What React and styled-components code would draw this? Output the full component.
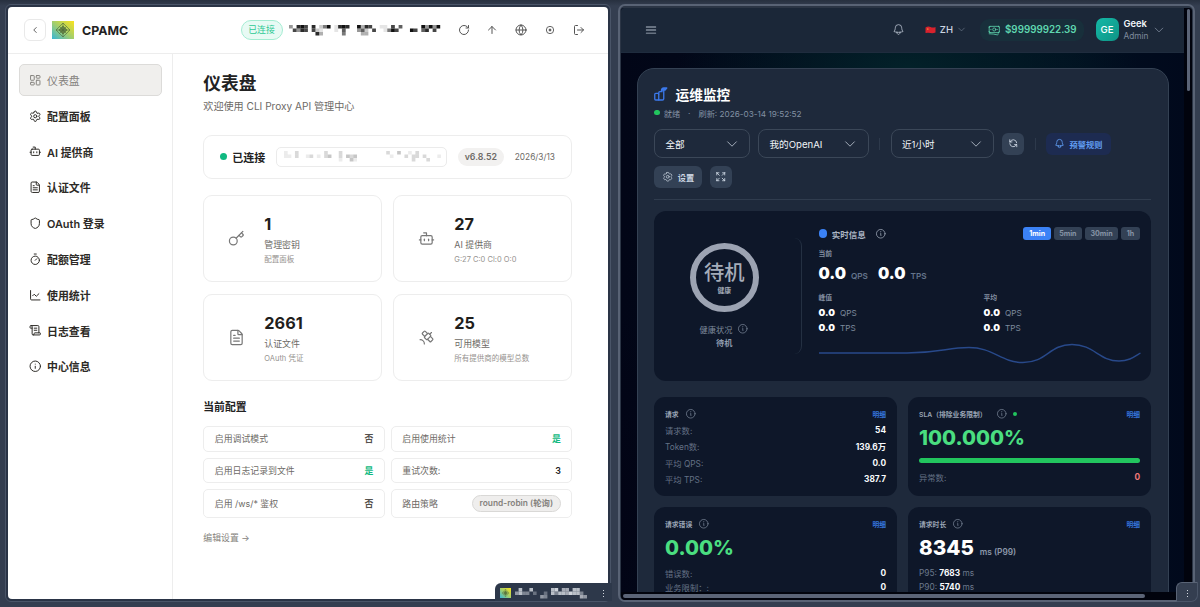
import React from 'react';
import styled, {createGlobalStyle} from 'styled-components';
import {
  ArrowUp, Bot, ChartLine, ChevronLeft, FileText, Globe, Info, Key, LayoutDashboard,
  LogOut, RotateCw, Satellite, ScrollText, Settings, Shield, Timer,
} from 'lucide-react';
import {
  HiBars3, HiOutlineArrowsPointingOut, HiOutlineBanknotes, HiOutlineBell,
  HiOutlineChevronDown, HiOutlineCog6Tooth, HiOutlineInformationCircle,
} from 'react-icons/hi2';
import {HiOutlineRefresh} from 'react-icons/hi';

const GlobalStyle = createGlobalStyle`
  * { box-sizing: border-box; }
  html, body { margin: 0; padding: 0; overflow: hidden; }
  body {
    font-family: Inter, "Noto Sans CJK SC", sans-serif;
    -webkit-font-smoothing: antialiased;
  }
  svg { display: block; flex: none; }
`;

const Desktop = styled.div`
  width: 1200px;
  height: 607px;
  display: flex;
  gap: 7px;
  padding: 4px 3px 3px 5px;
  background: linear-gradient(#27303f 0, #343e50 6px, #343e50 100%);
  overflow: hidden;
`;

/* ---------- left window ---------- */

const LightFrame = styled.div`
  width: 606px;
  height: 598px;
  padding: 2px;
  background: #2a3446;
  border: 1px solid #4a5568;
  border-radius: 6px;
  position: relative;
`;

const LightWindow = styled.div`
  width: 600px;
  height: 592px;
  border-radius: 4px;
  background: #fff;
  overflow: hidden;
`;

const LightHeader = styled.header`
  height: 46.5px;
  display: flex;
  align-items: center;
  padding: 1px 16px 0;
  border-bottom: 1px solid #ededed;
`;

const BackButton = styled.div`
  width: 22px;
  height: 22px;
  display: flex;
  align-items: center;
  justify-content: center;
  border: 1px solid #e9e9e9;
  border-radius: 6px;
  color: #444;
  margin-right: 6px;
`;

const Brand = styled.div`
  margin-left: 8px;
  width: 158.5px;
  font-size: 12.4px;
  font-weight: 700;
  color: #222;
`;

const Connected = styled.div`
  width: 42px;
  height: 20px;
  line-height: 18px;
  text-align: center;
  border: 1px solid #a4ecd2;
  border-radius: 10px;
  background: #e8faf4;
  color: #2ec995;
  font-size: 8.9px;
  margin-right: 6.5px;
`;

const HeaderIcons = styled.div`
  display: flex;
  gap: 16.7px;
  margin-left: auto;
  margin-right: 7.5px;
  color: #555;
`;

const LightBody = styled.div`
  display: flex;
  height: 546px;
`;

const Sidebar = styled.nav`
  width: 165px;
  padding: 10.5px 11px;
  border-right: 1px solid #ededed;
  display: flex;
  flex-direction: column;
  gap: 3.8px;
`;

const NavItem = styled.div`
  width: 142.5px;
  height: 32px;
  display: flex;
  align-items: center;
  gap: 6px;
  padding: 0 0 0 8.5px;
  border: 1px solid ${props => props.$active ? "#dcdbd9" : "transparent"};
  border-radius: 5px;
  background: ${props => props.$active ? "#f0efed" : "none"};
  color: ${props => props.$active ? "#85827d" : "#2d2a26"};
  font-size: 10.9px;
  font-weight: ${props => props.$active ? 400 : 600};
`;

const Main = styled.main`
  width: 400px;
  padding: 19px 0 0 30.3px;
`;

const PageTitle = styled.h1`
  margin: 0;
  height: 22px;
  line-height: 22px;
  font-size: 17.7px;
  font-weight: 600;
  color: #222;
`;

const PageSub = styled.p`
  margin: 4px 0 21.5px;
  height: 15px;
  line-height: 15px;
  font-size: 10.1px;
  color: #6d6a66;
`;

const StatusCard = styled.div`
  width: 369px;
  height: 43.5px;
  display: flex;
  align-items: center;
  padding: 0 16px;
  border: 1px solid #ededed;
  border-radius: 9px;
  margin-bottom: 16px;
`;

const Dot = styled.span`
  flex: none;
  width: ${props => props.$size}px;
  height: ${props => props.$size}px;
  border-radius: 50%;
  background: ${props => props.$color};
`;

const StatusText = styled.span`
  margin: 0 11px 0 5px;
  width: 33px;
  font-size: 11px;
  font-weight: 600;
  color: #222;
  white-space: nowrap;
`;

const UrlBox = styled.div`
  width: 170.5px;
  height: 20px;
  border: 1px solid #ebebeb;
  border-radius: 5px;
  padding: 3.5px 7px;
`;

const Version = styled.span`
  width: 46px;
  height: 18px;
  line-height: 18px;
  margin: 0 11px;
  text-align: center;
  border-radius: 9px;
  background: #f2f1f0;
  color: #6d6a66;
  font-size: 8.8px;
  font-weight: 600;
`;

const BuildDate = styled.span`
  font-size: 8.3px;
  color: #6d6a66;
`;

const StatGrid = styled.div`
  display: grid;
  grid-template-columns: 179px 179px;
  grid-auto-rows: 87.5px;
  gap: 11.5px 11px;
`;

const StatCard = styled.div`
  display: flex;
  align-items: center;
  border: 1px solid #ededed;
  border-radius: 9px;
  padding-left: 24px;
  gap: 19px;
  color: #777;
`;

const StatText = styled.div`
  display: flex;
  flex-direction: column;
  padding-top: 3px;
`;

const StatNumber = styled.b`
  height: 22px;
  line-height: 22px;
  font-size: 16.3px;
  color: #1f1e1c;
`;

const StatLabel = styled.span`
  height: 18px;
  line-height: 19px;
  font-size: 8.9px;
  color: #6d6a66;
`;

const StatHint = styled.span`
  height: 13px;
  line-height: 13px;
  font-size: 7.5px;
  color: #96938f;
  white-space: nowrap;
`;

const SectionTitle = styled.h2`
  margin: 18.5px 0 10.5px;
  height: 16px;
  line-height: 16px;
  font-size: 10.8px;
  font-weight: 700;
  color: #222;
`;

const ConfigGrid = styled.div`
  display: grid;
  grid-template-columns: 181.5px 181.5px;
  grid-template-rows: 25.5px 25.5px 28.5px;
  gap: 6px;
`;

const ConfigRow = styled.div`
  display: flex;
  align-items: center;
  justify-content: space-between;
  border: 1px solid #ededed;
  border-radius: 5px;
  padding: 0 10.5px;
  font-size: 8.9px;
  color: #6d6a66;
`;

const ConfigValue = styled.span`
  font-weight: 600;
  color: ${props => props.$on ? "#12b981" : props.$dark ? "#222" : "#55524e"};
`;

const StrategyTag = styled.span`
  width: 89px;
  height: 17px;
  line-height: 15px;
  text-align: center;
  background: #efeeed;
  border: 1px solid #d9d8d6;
  border-radius: 9px;
  font-weight: 600;
  font-size: 8.4px;
  color: #85827d;
`;

const EditLink = styled.div`
  margin-top: 12.5px;
  height: 16px;
  line-height: 16px;
  font-size: 8.9px;
  color: #85827d;
`;

const LightTab = styled.div`
  position: absolute;
  right: -2px;
  bottom: 0;
  width: 117px;
  height: 18.5px;
  display: flex;
  align-items: center;
  gap: 4px;
  padding: 3px 8px 0 5px;
  border-radius: 6px 0 0 0;
  background: #2d384a;
`;

const Dots = styled.div`
  display: flex;
  flex-direction: column;
  gap: 1.7px;
  margin-left: auto;
  span {
    width: 1.3px;
    height: 1.3px;
    background: #d3d8df;
  }
`;

/* ---------- right window ---------- */

const DarkFrame = styled.div`
  width: 577px;
  height: 598px;
  border: 2px solid #596375;
  border-radius: 7px;
  padding: 2px 1px 0 1px;
  background: #2b3545;
  position: relative;
`;

const DarkView = styled.div`
  width: 571px;
  height: 584px;
  display: flex;
  background: #01030d;
  border-radius: 3px 3px 0 0;
  overflow: hidden;
`;

const DarkPage = styled.div`
  width: 563px;
  height: 584px;
  overflow: hidden;
  background:
    radial-gradient(ellipse 230px 80px at 51% 10%, #032129 0, rgba(3, 33, 41, 0) 100%),
    radial-gradient(ellipse 50px 200px at 0 85%, #020415 0, rgba(2, 4, 21, 0) 100%),
    linear-gradient(90deg, #020617, #010f20 80%, #01091c);
`;

const VScroll = styled.div`
  width: 8px;
  padding: 1px 0 0 2.5px;
  &:before {
    content: '';
    display: block;
    width: 3.8px;
    height: 82px;
    border-radius: 2px;
    background: #5b6477;
  }
`;

const HScroll = styled.div`
  height: 8px;
  padding: 2px 0 0 2px;
  background: #01030d;
  border-radius: 0 0 4px 4px;
  &:before {
    content: '';
    display: block;
    width: 522px;
    height: 4px;
    border-radius: 2px;
    background: #5b6477;
  }
`;

const TopBar = styled.header`
  height: 44.5px;
  display: flex;
  align-items: center;
  padding: 0 19px 0 23px;
  background: #1b2738;
  border-bottom: 1px solid #1f2c3e;
  color: #b6bfcc;
  > svg:first-child { margin-right: auto; }
`;

const Lang = styled.div`
  display: flex;
  align-items: center;
  gap: 4px;
  margin: 0 14px 0 20px;
  font-size: 9.5px;
  font-weight: 500;
  color: #cbd5e1;
`;

const Balance = styled.div`
  width: 104px;
  height: 22px;
  display: flex;
  align-items: center;
  gap: 4.5px;
  padding-left: 8px;
  border-radius: 9px;
  background: #182f3b;
  color: #5fd7b0;
  font-size: 9.8px;
  font-weight: 600;
`;

const Avatar = styled.div`
  width: 23px;
  height: 23px;
  line-height: 23px;
  text-align: center;
  margin: 0 5px 0 11.5px;
  border-radius: 7px;
  background: linear-gradient(135deg, #14b8a6, #0f9486);
  color: #fff;
  font-size: 9.6px;
  font-weight: 500;
`;

const UserText = styled.div`
  width: 29.5px;
  padding-top: 1px;
  display: flex;
  flex-direction: column;
  line-height: 12px;
  font-size: 8.3px;
  color: #7f8b9d;
  b {
    font-size: 9.4px;
    font-weight: 600;
    color: #f1f5f9;
  }
`;

const Board = styled.section`
  margin: 15.5px 0 0 15.5px;
  width: 532px;
  height: 700px;
  padding: 16px 16.5px;
  border: 1px solid #344153;
  border-radius: 17px;
  background: #1e293b;
`;

const BoardTitle = styled.h2`
  margin: 0 0 1px;
  height: 18px;
  display: flex;
  align-items: center;
  gap: 8px;
  font-size: 13.7px;
  font-weight: 700;
  color: #fff;
`;

const BoardStatus = styled.div`
  height: 17px;
  display: flex;
  align-items: center;
  gap: 4.2px;
  font-size: 8.2px;
  color: #8290a3;
  i {
    width: 10px;
    text-align: center;
    font-style: normal;
  }
`;

const Toolbar = styled.div`
  height: 29px;
  display: flex;
  align-items: center;
  margin-top: ${props => props.$top}px;
`;

const Select = styled.div`
  width: ${props => props.$width}px;
  height: 29px;
  display: flex;
  align-items: center;
  justify-content: space-between;
  padding: 0 10.5px;
  border: 1px solid #3b4758;
  border-radius: 8px;
  margin-right: 8px;
  font-size: 9.6px;
  color: #f1f5f9;
  svg { color: #b4bdc9; }
`;

const Divider = styled.span`
  width: 1px;
  height: 12px;
  background: #2d394b;
  margin: 0 10.5px 0 2.5px;
`;

const ToolButton = styled.div`
  width: ${props => props.$width}px;
  height: 22px;
  display: flex;
  align-items: center;
  justify-content: center;
  gap: 4.5px;
  margin-right: 8px;
  border-radius: 6px;
  background: ${props => props.$blue ? "#1d2b51" : "#334155"};
  color: ${props => props.$blue ? "#609cf0" : "#cbd5e1"};
  font-size: 8.2px;
  font-weight: 600;
`;

const Rule = styled.div`
  height: 1px;
  background: #303c4e;
  margin: 7px 0 11px;
`;

const Realtime = styled.div`
  height: 170px;
  display: flex;
  border-radius: 12px;
  background: #0e1729;
  padding: 27px 11px 0;
`;

const HealthCol = styled.div`
  width: 138px;
  height: 116px;
  border-right: 1px solid #243042;
  border-radius: 8px;
  display: flex;
  flex-direction: column;
  align-items: center;
  padding-top: 5.5px;
  padding-right: 17px;
`;

const Ring = styled.div`
  width: 69px;
  height: 69px;
  border: 6px solid #9ca3b2;
  border-radius: 50%;
  display: flex;
  flex-direction: column;
  align-items: center;
  color: #a4acb9;
  font-weight: 500;
  font-size: 20.3px;
  line-height: 26px;
  padding-top: 11px;
  small {
    font-size: 6.8px;
    line-height: 9px;
    font-weight: 600;
  }
`;

const HealthLabel = styled.div`
  height: 14px;
  margin-top: 9.5px;
  display: flex;
  align-items: center;
  gap: 5px;
  font-size: 8.2px;
  color: #7c899b;
`;

const HealthState = styled.div`
  height: 14px;
  line-height: 14px;
  font-size: 8.2px;
  font-weight: 600;
  color: #8f9bad;
`;

const LiveCol = styled.div`
  width: 321.5px;
  margin: -11px 0 0 17px;
`;

const LiveHead = styled.div`
  height: 14px;
  display: flex;
  align-items: center;
  font-size: 8.5px;
  font-weight: 600;
  color: #aab4c3;
  span + b { margin: 0 9px 0 5px; font-weight: 600; }
`;

const Ranges = styled.div`
  display: flex;
  gap: 2.7px;
  margin-left: auto;
`;

const Range = styled.span`
  width: ${props => props.$width}px;
  height: 13.5px;
  line-height: 13.5px;
  text-align: center;
  border-radius: 3px;
  background: ${props => props.$on ? "#3b82f6" : "#334155"};
  color: ${props => props.$on ? "#fff" : "#8693a5"};
  font-size: 7.1px;
  font-weight: 700;
`;

const Caption = styled.div`
  height: 12px;
  line-height: 12px;
  margin-top: ${props => props.$top}px;
  font-size: 6.8px;
  font-weight: 600;
  color: #8490a2;
`;

const Metric = styled.div`
  height: ${props => props.$big ? 24 : 15}px;
  line-height: ${props => props.$big ? 27 : 17}px;
  display: flex;
  align-items: baseline;
  gap: 5px;
  font-size: 8.2px;
  font-weight: ${props => props.$big ? 600 : 400};
  color: ${props => props.$big ? "#64748b" : "#7d8a9d"};
  b {
    font-size: ${props => props.$big ? 15.9 : 9.5}px;
    font-weight: 900;
    color: #fff;
  }
`;

const MetricPair = styled.div`
  display: grid;
  grid-template-columns: ${props => props.$cols};
  margin-bottom: ${props => props.$bottom}px;
`;

const CardGrid = styled.div`
  display: grid;
  grid-template-columns: 243px 243px;
  grid-template-rows: 98.5px 130px;
  gap: 11.5px 11px;
  margin-top: 16.5px;
`;

const Card = styled.div`
  border-radius: 11px;
  background: #0e1729;
  padding: 10.5px 11px;
`;

const CardHead = styled.div`
  height: 12px;
  display: flex;
  align-items: center;
  gap: 6px;
  font-size: 6.8px;
  font-weight: 600;
  color: #9aa5b5;
  svg { color: #7c899b; }
`;

const SlaName = styled.span`
  width: 70.5px;
  white-space: nowrap;
`;

const Detail = styled.a`
  margin-left: auto;
  font-weight: 700;
  color: #3574dc;
`;

const CardRows = styled.div`
  padding-top: 2px;
`;

const CardRow = styled.div`
  height: ${props => props.$height || 16.5}px;
  display: flex;
  align-items: center;
  justify-content: space-between;
  font-size: 8.3px;
  color: #647185;
  b {
    font-weight: 700;
    color: ${props => props.$red ? "#f07878" : "#f8fafc"};
  }
`;

const Big = styled.div`
  height: 36px;
  line-height: 36px;
  font-size: ${props => props.$white ? 20.6 : 20.3}px;
  font-weight: 800;
  color: ${props => props.$white ? "#fff" : "#4ade80"};
  small {
    margin-left: 6px;
    font-size: 8.3px;
    font-weight: 600;
    color: #8c98a9;
  }
`;

const Bar = styled.div`
  height: 5.8px;
  margin: 2px 0 5px;
  border-radius: 3px;
  background: #22c55e;
`;

const Percentile = styled.div`
  height: 14px;
  line-height: 14px;
  font-size: 8.3px;
  color: #6c798c;
  b { color: #f8fafc; }
`;

const DarkTab = styled.div`
  position: absolute;
  right: -5px;
  bottom: -2px;
  width: 22.5px;
  height: 20px;
  padding: 7px 10px;
  border: 1px solid #596375;
  border-right-color: #4a5568;
  border-bottom-color: #4a5568;
  border-radius: 6px 0 7px 0;
  background: #343e50;
`;

// every character is one cell, 0 = empty and 9 = solid
const Mosaic = ({rows, cell, color, width}) => (
  <svg width={width} height={rows.length * 3.5}>
    {rows.map((row, y) => row.split('').map((c, x) => (
      c !== '0' && <rect key={`${x}-${y}`} x={x * cell} y={y * 3.5} width={cell} height={3.5} fill={color} opacity={c / 9} />
    )))}
  </svg>
);

const userMosaic = [
  "4089708025901898009387001107060000094949",
  "0748707210001060004620700159700097068070",
  "0000000830000050000330000000000000000000",
];
const urlMosaic = [
  "1002000000020002000000000000200300102000000",
  "1102001201023002032300000000010002022020001",
  "0000000000000001003100000000000000020002000",
];
const tabMosaic = [
  "07007000007806607700",
  "57440300307477687740",
  "00000005400000000065",
];

const Logo = ({width, height}) => (
  <svg width={width} height={height} viewBox="0 0 22 18" preserveAspectRatio="none">
    <defs>
      <linearGradient id="logo" x1="0" y1="1" x2="1" y2="0">
        <stop offset="0" stopColor="#38b6d8" />
        <stop offset="0.5" stopColor="#a5cf6a" />
        <stop offset="1" stopColor="#fbe31c" />
      </linearGradient>
    </defs>
    <rect width="22" height="18" fill="url(#logo)" />
    <g fill="none" stroke="#4f6a3a" strokeWidth="0.6">
      <path d="M11 2 18 9 11 16 4 9Z" />
      <path d="M11 5 15 9 11 13 7 9Z" fill="#6b8a48" />
      <path d="M7.5 5.5 14.5 12.5M14.5 5.5 7.5 12.5M11 2V16M4 9H18" />
    </g>
  </svg>
);

const ThemeIcon = () => (
  <svg width="12" height="12" viewBox="0 0 24 24" fill="none" stroke="currentColor" strokeWidth="1.8">
    <circle cx="12" cy="12" r="7.3" />
    <circle cx="12" cy="12" r="2" fill="currentColor" />
  </svg>
);

const ChartIcon = () => (
  <svg width="13.5" height="14" viewBox="0 0 40 42" fill="none" stroke="#3b78ea" strokeWidth="4" strokeLinejoin="round" strokeLinecap="round">
    <path d="M2 22q0-3 3-3h6q3 0 3 3v17H5q-3 0-3-3Z" />
    <path d="M14 22v-5q0-3 3-3h7M14 39h11q4 0 4-4V8" />
    <path d="M22 10q1-7 7-7h9l-5 6h-6Z" fill="#3b78ea" />
  </svg>
);

const FlagIcon = () => (
  <svg width="11" height="8" viewBox="0 0 22 16">
    <path d="M1 3Q6 0 11 2T21 2V13Q16 15 11 14T1 14Z" fill="#d8222d" />
    <circle cx="5.5" cy="6" r="1.7" fill="#ee8b35" />
  </svg>
);

const Wave = () => (
  <svg width="322" height="30" viewBox="0 0 322 30" fill="none" stroke="#28498a" strokeWidth="1.4">
    <path d="M0 15H88C122 15 128 9.5 150 9.5C174 9.5 182 24.5 204 24.5C228 24.5 230 6.5 253 6.5C275 6.5 280 23 300 23C310 23 315 19 321.5 15" />
  </svg>
);

const InfoIcon = () => <HiOutlineInformationCircle size={11.5} />;

const nav = [
  [LayoutDashboard, "仪表盘"],
  [Settings, "配置面板"],
  [Bot, "AI 提供商"],
  [FileText, "认证文件"],
  [Shield, "OAuth 登录"],
  [Timer, "配额管理"],
  [ChartLine, "使用统计"],
  [ScrollText, "日志查看"],
  [Info, "中心信息"],
];

const stats = [
  [Key, "1", "管理密钥", "配置面板"],
  [Bot, "27", "AI 提供商", "G:27 C:0 Cl:0 O:0"],
  [FileText, "2661", "认证文件", "OAuth 凭证"],
  [Satellite, "25", "可用模型", "所有提供商的模型总数"],
];

const requests = [
  ["请求数:", "54"],
  ["Token数:", "139.6万"],
  ["平均 QPS:", "0.0"],
  ["平均 TPS:", "387.7"],
];

const MoreDots = () => <Dots><span /><span /><span /></Dots>;

const ProxyPanel = () => (
  <LightFrame>
    <LightWindow>
      <LightHeader>
        <BackButton><ChevronLeft size={10} /></BackButton>
        <Logo width={22} height={18} />
        <Brand>CPAMC</Brand>
        <Connected>已连接</Connected>
        <Mosaic rows={userMosaic} cell={3.78} width={152} color="#111" />
        <HeaderIcons>
          <RotateCw size={12} />
          <ArrowUp size={12} />
          <Globe size={12} />
          <ThemeIcon />
          <LogOut size={12} />
        </HeaderIcons>
      </LightHeader>
      <LightBody>
        <Sidebar>
          {nav.map(([Icon, label], i) => (
            <NavItem key={label} $active={i === 0}><Icon size={12.5} strokeWidth={1.9} />{label}</NavItem>
          ))}
        </Sidebar>
        <Main>
          <PageTitle>仪表盘</PageTitle>
          <PageSub>欢迎使用 CLI Proxy API 管理中心</PageSub>
          <StatusCard>
            <Dot $size={7} $color="#10b981" />
            <StatusText>已连接</StatusText>
            <UrlBox><Mosaic rows={urlMosaic} cell={3.65} width={157} color="#555" /></UrlBox>
            <Version>v6.8.52</Version>
            <BuildDate>2026/3/13</BuildDate>
          </StatusCard>
          <StatGrid>
            {stats.map(([Icon, value, label, hint]) => (
              <StatCard key={label}>
                <Icon size={17} strokeWidth={1.7} />
                <StatText>
                  <StatNumber>{value}</StatNumber>
                  <StatLabel>{label}</StatLabel>
                  <StatHint>{hint}</StatHint>
                </StatText>
              </StatCard>
            ))}
          </StatGrid>
          <SectionTitle>当前配置</SectionTitle>
          <ConfigGrid>
            <ConfigRow>启用调试模式<ConfigValue>否</ConfigValue></ConfigRow>
            <ConfigRow>启用使用统计<ConfigValue $on>是</ConfigValue></ConfigRow>
            <ConfigRow>启用日志记录到文件<ConfigValue $on>是</ConfigValue></ConfigRow>
            <ConfigRow>重试次数:<ConfigValue $dark>3</ConfigValue></ConfigRow>
            <ConfigRow>启用 /ws/* 鉴权<ConfigValue>否</ConfigValue></ConfigRow>
            <ConfigRow>路由策略<StrategyTag>round-robin (轮询)</StrategyTag></ConfigRow>
          </ConfigGrid>
          <EditLink>编辑设置 →</EditLink>
        </Main>
      </LightBody>
    </LightWindow>
    <LightTab>
      <Logo width={11} height={10} />
      <Mosaic rows={tabMosaic} cell={3.6} width={73} color="#e2e6ec" />
      <MoreDots />
    </LightTab>
  </LightFrame>
);

const Monitor = () => (
  <DarkFrame>
    <DarkView>
      <DarkPage>
        <TopBar>
          <HiBars3 size={14} />
          <HiOutlineBell size={13} />
          <Lang><FlagIcon />ZH<HiOutlineChevronDown size={9} color="#7f8b9d" /></Lang>
          <Balance><HiOutlineBanknotes size={12.5} />$99999922.39</Balance>
          <Avatar>GE</Avatar>
          <UserText><b>Geek</b>Admin</UserText>
          <HiOutlineChevronDown size={12} color="#8793a4" />
        </TopBar>
        <Board>
          <BoardTitle><ChartIcon />运维监控</BoardTitle>
          <BoardStatus><Dot $size={5.5} $color="#22c55e" />就绪<i>·</i>刷新: 2026-03-14 19:52:52</BoardStatus>
          <Toolbar $top={8}>
            <Select $width={96}>全部<HiOutlineChevronDown size={14} /></Select>
            <Select $width={110.5}>我的OpenAI<HiOutlineChevronDown size={14} /></Select>
            <Divider />
            <Select $width={103.5}>近1小时<HiOutlineChevronDown size={14} /></Select>
            <ToolButton $width={22}><HiOutlineRefresh size={10.5} /></ToolButton>
            <Divider />
            <ToolButton $width={64.5} $blue><HiOutlineBell size={11} strokeWidth={1.8} />预警规则</ToolButton>
          </Toolbar>
          <Toolbar $top={4.5}>
            <ToolButton $width={48}><HiOutlineCog6Tooth size={11.5} />设置</ToolButton>
            <ToolButton $width={22}><HiOutlineArrowsPointingOut size={11.5} strokeWidth={1.8} /></ToolButton>
          </Toolbar>
          <Rule />
          <Realtime>
            <HealthCol>
              <Ring>待机<small>健康</small></Ring>
              <HealthLabel>健康状况<InfoIcon /></HealthLabel>
              <HealthState>待机</HealthState>
            </HealthCol>
            <LiveCol>
              <LiveHead>
                <Dot $size={8.3} $color="#3b82f6" /><b>实时信息</b><InfoIcon />
                <Ranges>
                  <Range $width={27.5} $on>1min</Range>
                  <Range $width={28.5}>5min</Range>
                  <Range $width={33.5}>30min</Range>
                  <Range $width={19}>1h</Range>
                </Ranges>
              </LiveHead>
              <Caption $top={7}>当前</Caption>
              <MetricPair $cols="59.5px 1fr" $bottom={1}>
                <Metric $big><b>0.0</b>QPS</Metric>
                <Metric $big><b>0.0</b>TPS</Metric>
              </MetricPair>
              <MetricPair $cols="165px 1fr" $bottom={4}>
                <div>
                  <Caption $top={7}>峰值</Caption>
                  <Metric><b>0.0</b>QPS</Metric>
                  <Metric><b>0.0</b>TPS</Metric>
                </div>
                <div>
                  <Caption $top={7}>平均</Caption>
                  <Metric><b>0.0</b>QPS</Metric>
                  <Metric><b>0.0</b>TPS</Metric>
                </div>
              </MetricPair>
              <Wave />
            </LiveCol>
          </Realtime>
          <CardGrid>
            <Card>
              <CardHead>请求<InfoIcon /><Detail>明细</Detail></CardHead>
              <CardRows>
                {requests.map(([label, value]) => (
                  <CardRow key={label}>{label}<b>{value}</b></CardRow>
                ))}
              </CardRows>
            </Card>
            <Card>
              <CardHead><SlaName>SLA（排除业务限制）</SlaName><InfoIcon /><Dot $size={4} $color="#22c55e" /><Detail>明细</Detail></CardHead>
              <Big>100.000%</Big>
              <Bar />
              <CardRow $red>异常数:<b>0</b></CardRow>
            </Card>
            <Card>
              <CardHead>请求错误<InfoIcon /><Detail>明细</Detail></CardHead>
              <Big>0.00%</Big>
              <CardRow $height={14}>错误数:<b>0</b></CardRow>
              <CardRow $height={14}>业务限制：:<b>0</b></CardRow>
            </Card>
            <Card>
              <CardHead>请求时长<InfoIcon /><Detail>明细</Detail></CardHead>
              <Big $white>8345<small>ms (P99)</small></Big>
              <Percentile>P95: <b>7683</b> ms</Percentile>
              <Percentile>P90: <b>5740</b> ms</Percentile>
            </Card>
          </CardGrid>
        </Board>
      </DarkPage>
      <VScroll />
    </DarkView>
    <HScroll />
    <DarkTab><MoreDots /></DarkTab>
  </DarkFrame>
);

const App = () => (
  <Desktop>
    <GlobalStyle />
    <ProxyPanel />
    <Monitor />
  </Desktop>
);

export default App;
